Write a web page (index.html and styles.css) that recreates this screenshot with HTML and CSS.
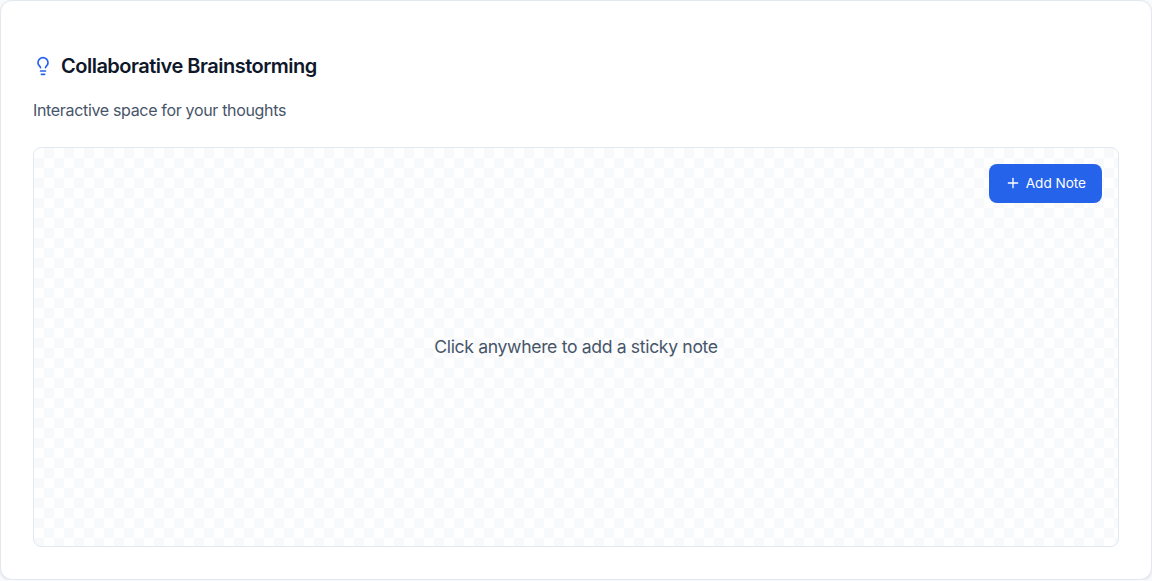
FILE: index.html
```html
<!DOCTYPE html>
<html lang="en">
<head>
<meta charset="utf-8">
<title>Collaborative Brainstorming</title>
<link rel="stylesheet" href="styles.css">
</head>
<body>
<section class="card">
  <h2 class="title">
    <svg class="bulb" viewBox="0 0 24 24" fill="none" stroke="currentColor" stroke-width="2" stroke-linecap="round" stroke-linejoin="round"><path d="M15 14c.2-1 .7-1.7 1.5-2.5 1-.9 1.5-2.2 1.5-3.5A6 6 0 0 0 6 8c0 1 .2 2.2 1.5 3.5.7.7 1.3 1.5 1.5 2.5"/><path d="M9 18h6"/><path d="M10 22h4"/></svg>
    <span>Collaborative Brainstorming</span>
  </h2>
  <p class="subtitle">Interactive space for your thoughts</p>
  <div class="board">
    <p class="hint">Click anywhere to add a sticky note</p>
    <button class="add" type="button">
      <svg class="plus" viewBox="0 0 24 24" fill="none" stroke="currentColor" stroke-width="2" stroke-linecap="round" stroke-linejoin="round"><path d="M5 12h14"/><path d="M12 5v14"/></svg>
      <span>Add Note</span>
    </button>
  </div>
</section>
</body>
</html>
```
FILE: styles.css
```css
* { box-sizing: border-box; }
body {
  margin: 0;
  background: #f8fafc;
  font-family: Inter, "Liberation Sans", sans-serif;
}
.card {
  height: 580px;
  padding: 48px 32px 32px;
  display: flex;
  flex-direction: column;
  background: #fff;
  border: 1px solid #e2e8f0;
  border-radius: 12px;
  box-shadow: 0 1px 3px rgba(0, 0, 0, 0.1);
}
.title {
  display: flex;
  align-items: center;
  gap: 8px;
  height: 34px;
  margin: 0;
  font-size: 20px;
  line-height: 34px;
  font-weight: 600;
  letter-spacing: -0.5px;
  color: #0f172a;
}
.bulb { width: 20px; height: 20px; color: #2563eb; }
.subtitle {
  margin: 14px 0 23px;
  font-size: 16px;
  line-height: 27px;
  letter-spacing: -0.33px;
  color: #475569;
}
.board {
  position: relative;
  display: flex;
  align-items: center;
  justify-content: center;
  height: 400px;
  border: 1px solid #e2e8f0;
  border-radius: 8px;
  background: repeating-conic-gradient(#f8f9fb 0 25%, #fff 0 50%) 0 0 / 20px 20px;
}
.hint {
  margin: 0;
  font-size: 17.6px;
  line-height: 30px;
  letter-spacing: -0.34px;
  color: #475569;
}
.add {
  position: absolute;
  top: 16px;
  right: 16px;
  display: flex;
  align-items: center;
  justify-content: flex-end;
  gap: 5px;
  width: 113px;
  height: 39px;
  padding: 0 16px 1px 0;
  border: 0;
  border-radius: 8px;
  background: #2563eb;
  color: #fff;
  font: 400 13.6px/20px Inter, "Liberation Sans", sans-serif;
  letter-spacing: -0.03px;
}
.plus { width: 16px; height: 16px; }
```
